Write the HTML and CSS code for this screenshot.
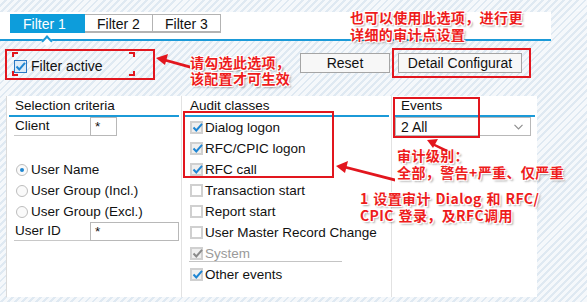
FILE: index.html
```html
<!DOCTYPE html>
<html lang="en">
<head>
    <meta charset="UTF-8">
    <title>Audit Filter</title>
    <link rel="stylesheet" href="styles.css">
</head>
<body>
    <!-- Tab strip -->
    <div class="tabbar">
        <div class="tab active">Filter 1</div>
        <div class="tab">Filter 2</div>
        <div class="tab">Filter 3</div>
        <span class="notch"></span>
    </div>

    <!-- Toolbar -->
    <div class="toolbar">
        <div class="filter-wrap">
            <label class="filter-active">
                <span class="cb cb-blue"><svg viewBox="0 0 13 13"><path d="M2.5 6.5 L5.3 9.5 L11 2.8"/></svg></span>
                Filter active
            </label>
        </div>
        <button class="btn reset">Reset</button>
        <button class="btn detail">Detail Configurat</button>
    </div>

    <!-- Main panel -->
    <div class="panel">
        <div class="col col-sel">
            <div class="col-head">Selection criteria</div>
            <div class="row field"><span class="lbl">Client</span><span class="inp short">*</span></div>
            <div class="row"></div>
            <div class="row"><span class="radio on"></span>User Name</div>
            <div class="row"><span class="radio"></span>User Group (Incl.)</div>
            <div class="row"><span class="radio"></span>User Group (Excl.)</div>
            <div class="row field"><span class="lbl">User ID</span><span class="inp long">*</span></div>
        </div>

        <div class="col col-audit">
            <div class="col-head">Audit classes</div>
            <div class="row"><span class="cb on"><svg viewBox="0 0 13 13"><path d="M2.5 6.5 L5.3 9.5 L11 2.8"/></svg></span>Dialog logon</div>
            <div class="row"><span class="cb on"><svg viewBox="0 0 13 13"><path d="M2.5 6.5 L5.3 9.5 L11 2.8"/></svg></span>RFC/CPIC logon</div>
            <div class="row"><span class="cb on"><svg viewBox="0 0 13 13"><path d="M2.5 6.5 L5.3 9.5 L11 2.8"/></svg></span>RFC call</div>
            <div class="row"><span class="cb"></span>Transaction start</div>
            <div class="row"><span class="cb"></span>Report start</div>
            <div class="row"><span class="cb"></span>User Master Record Change</div>
            <div class="row disabled"><span class="cb on grey"><svg viewBox="0 0 13 13"><path d="M2.5 6.5 L5.3 9.5 L11 2.8"/></svg></span>System</div>
            <div class="row"><span class="cb on"><svg viewBox="0 0 13 13"><path d="M2.5 6.5 L5.3 9.5 L11 2.8"/></svg></span>Other events</div>
        </div>

        <div class="col col-events">
            <div class="col-head">Events</div>
            <div class="select">
                <span>2 All</span>
                <svg class="chev" viewBox="0 0 9 6"><path d="M0.5 0.8 L4.5 4.8 L8.5 0.8"/></svg>
            </div>
        </div>
    </div>

    <!-- Annotations -->
    <div class="mark mark-filter"></div>
    <div class="mark mark-detail"></div>
    <div class="mark mark-audit"></div>
    <div class="mark mark-events"></div>

    <div class="note note-top">也可以使用此选项，进行更<br>详细的审计点设置</div>
    <div class="note note-check">请勾选此选项，<br>该配置才可生效</div>
    <div class="note note-level">审计级别：<br>全部，警告+严重、仅严重</div>
    <div class="note note-audit">1 设置审计 Dialog 和 RFC/<br>CPIC 登录，及RFC调用</div>

    <svg class="arrows" viewBox="0 0 587 302">
        <polygon points="190,65.5 166,59 165,61.5 190,68.5"/>
        <polygon points="156,58 168,54 165,65"/>
        <polygon points="395,178.5 346,166 345,168.5 395,181.5"/>
        <polygon points="336,166 348,161 345,173"/>
        <polygon points="448,150 433,143 432,145 446,152"/>
        <polygon points="427,140 438,139 433,148"/>
    </svg>
</body>
</html>
```

FILE: styles.css
```css
* {
    margin: 0;
    padding: 0;
    box-sizing: border-box;
}
body {
    width: 587px;
    height: 302px;
    overflow: hidden;
    position: relative;
    font-family: 'Liberation Sans', Arial, sans-serif;
    font-size: 13.5px;
    color: #111;
    background: repeating-linear-gradient(135deg, #f5f8fb 0, #f5f8fb 3px, #dfe9f2 3px, #dfe9f2 5px);
}

/* tabs */
.tabbar {
    position: relative;
    display: flex;
    margin-top: 12px;
    width: 551px;
    height: 29px;
    padding: 2px 0 0 10px;
    background: #fff;
    border-bottom: 2px solid #1b9ad8;
}
.tab {
    height: 19px;
    line-height: 18px;
    padding-left: 12px;
    font-size: 14px;
    background: #fff;
    border: 1px solid #b3b3b3;
    border-bottom-width: 2px;
    width: 68px;
}
.tab + .tab {
    border-left: none;
}
.tab.active {
    width: 75px;
    background: #0d9ddb;
    border-color: #0d9ddb;
    color: #fff;
}
.notch {
    position: absolute;
    left: 43px;
    top: 25px;
    width: 8px;
    height: 8px;
    background: #fff;
    border-top: 2px solid #1b9ad8;
    border-left: 2px solid #1b9ad8;
    transform: rotate(45deg);
}

/* toolbar */
.toolbar {
    display: flex;
    align-items: flex-start;
    height: 55px;
    padding: 12px 0 0 14px;
}
.filter-wrap {
    width: 286px;
    padding-top: 5px;
}
.filter-active {
    display: flex;
    align-items: center;
    gap: 2px;
    font-size: 14px;
}
.btn {
    height: 20px;
    font-family: inherit;
    font-size: 14px;
    color: #111;
    background: #f7f7f7;
    border: 1px solid #a5a5a5;
}
.reset {
    width: 90px;
}
.detail {
    width: 124px;
    margin-left: 8px;
}

/* panel */
.panel {
    display: flex;
    margin-left: 6px;
    width: 531px;
    height: 201px;
    background: #fff;
    border-left: 1px solid #dadada;
}
.col {
    border-right: 1px solid #e2e2e2;
}
.col-sel {
    width: 175px;
}
.col-audit {
    width: 210px;
}
.col-events {
    width: 145px;
    border-right: none;
}
.col-head {
    height: 21px;
    line-height: 19px;
    margin: 0 2px;
    padding-left: 6px;
    border-bottom: 2px solid #1b9ad8;
}
.col-events .col-head {
    padding-left: 7px;
}
.row {
    display: flex;
    align-items: center;
    height: 21px;
    padding-left: 8px;
}
.col-sel .row {
    padding-left: 9px;
}
.field {
    align-items: flex-start;
    padding-left: 7px !important;
}
.lbl {
    width: 76px;
    height: 19px;
    line-height: 18px;
    padding-left: 1px;
    border-bottom: 1px solid #c8c8c8;
}
.inp {
    height: 19px;
    line-height: 18px;
    padding-left: 4px;
    border: 1px solid #b8b8b8;
}
.inp.short {
    width: 27px;
}
.inp.long {
    width: 89px;
}
.radio {
    width: 12px;
    height: 12px;
    margin-right: 3px;
    border-radius: 50%;
    border: 1px solid #bdbdbd;
    background: #fafafa;
    position: relative;
}
.radio.on::after {
    content: '';
    position: absolute;
    left: 3px;
    top: 3px;
    width: 4px;
    height: 4px;
    border-radius: 50%;
    background: #1e86d0;
}
.cb {
    width: 13px;
    height: 13px;
    margin-right: 2px;
    border: 2px solid #d0d0d0;
    background: #fff;
    flex: none;
}
.cb.on {
    background: #efefef;
}
.cb svg {
    display: block;
    width: 13px;
    height: 13px;
    margin: -2px 0 0 -1px;
    fill: none;
    stroke: #1f86d3;
    stroke-width: 2;
}
.cb.grey svg {
    stroke: #8a8a8a;
}
.cb-blue {
    width: 13px;
    height: 13px;
    border: 1px solid #2a78c4;
    background: #dcebf8;
}
.cb-blue svg {
    margin: -1px 0 0 -1px;
}
.disabled {
    color: #9a9a9a;
}
.disabled::after {
    content: '';
    position: absolute;
    left: 189px;
    top: 261px;
    width: 153px;
    height: 1px;
    background: #c4c4c4;
}
.select {
    display: flex;
    align-items: center;
    justify-content: space-between;
    margin: 0 6px 0 3px;
    height: 19px;
    padding: 0 7px 0 5px;
    border: 1px solid #b8b8b8;
    font-size: 14px;
}
.chev {
    width: 9px;
    height: 6px;
    fill: none;
    stroke: #8f8f8f;
    stroke-width: 1.2;
}

/* annotations */
.mark {
    position: absolute;
    border: 2px solid #e2161e;
}
.mark-filter {
    left: 5px;
    top: 49px;
    width: 150px;
    height: 31px;
}
.mark-filter::before,
.mark-filter::after {
    content: '';
    position: absolute;
    top: 1px;
    width: 119px;
    height: 20px;
    left: 5px;
    border: 2px solid #e2161e;
}
.mark-filter::after {
    clip-path: polygon(0 0, 6px 0, 6px 5px, 0 5px, 0 0, 100% 0, 100% 0, calc(100% - 6px) 0, calc(100% - 6px) 5px, 100% 5px, 100% 0, 100% 0);
}
.mark-filter::before {
    clip-path: polygon(0 0, 6px 0, 6px 5px, 0 5px, 0 0, 0 100%, 0 calc(100% - 5px), 6px calc(100% - 5px), 6px 100%, calc(100% - 6px) 100%, calc(100% - 6px) calc(100% - 5px), 100% calc(100% - 5px), 100% 100%, 0 100%);
}
.mark-detail {
    left: 392px;
    top: 48px;
    width: 139px;
    height: 30px;
}
.mark-audit {
    left: 183px;
    top: 111px;
    width: 151px;
    height: 67px;
}
.mark-events {
    left: 393px;
    top: 97px;
    width: 87px;
    height: 41px;
}
.note {
    position: absolute;
    font-family: 'Noto Sans CJK SC', 'Noto Sans', sans-serif;
    font-weight: bold;
    font-size: 14px;
    line-height: 17px;
    color: #ee1c1c;
    white-space: nowrap;
    text-shadow: 1px 1px 0 #fff, -1px -1px 0 #fff, 1px -1px 0 #fff, -1px 1px 0 #fff, 2px 2px 2px rgba(0, 0, 0, 0.35);
}
.note-top {
    left: 350px;
    top: 9px;
    letter-spacing: 0.4px;
}
.note-check {
    left: 190px;
    top: 54px;
    line-height: 16px;
    letter-spacing: 0.3px;
}
.note-level {
    left: 397px;
    top: 147px;
    letter-spacing: 0.4px;
}
.note-audit {
    left: 360px;
    top: 190px;
    letter-spacing: 0.4px;
    word-spacing: 1px;
}
.arrows {
    position: absolute;
    left: 0;
    top: 0;
    width: 587px;
    height: 302px;
    fill: #e2161e;
    pointer-events: none;
}
```
